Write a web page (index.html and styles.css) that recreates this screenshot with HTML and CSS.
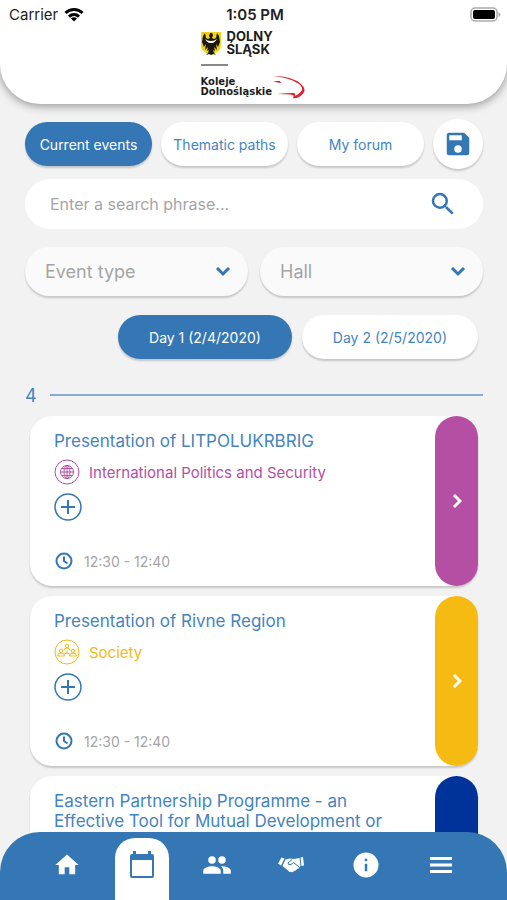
FILE: index.html
```html
<!DOCTYPE html>
<html lang="en">
<head>
    <meta charset="UTF-8">
    <meta name="viewport" content="width=device-width, initial-scale=1.0">
    <title>Current events</title>
    <link rel="stylesheet" href="styles.css">
</head>
<body>
    <header class="header">
        <!-- Status bar -->
        <div class="status">
            <div class="status__carrier">
                <span>Carrier</span>
                <svg width="20" height="15" viewBox="0 0 20 15" fill="none" stroke="#000" stroke-width="3">
                    <path d="M1.5 6a12 12 0 0 1 17 0"/>
                    <path d="M5 9.6a7.2 7.2 0 0 1 10 0"/>
                    <path d="M10 14.5L7 11.6a4.3 4.3 0 0 1 6 0z" fill="#000" stroke="none"/>
                </svg>
            </div>
            <span class="status__time">1:05 PM</span>
            <svg class="status__battery" width="31" height="15" viewBox="0 0 31 15">
                <rect x="1" y="1" width="26" height="13" rx="4" fill="#fff" stroke="#aaa" stroke-width="1.5"/>
                <rect x="3" y="3" width="22" height="9" rx="2"/>
                <path d="M28.5 5v5q2-1 2-2.5t-2-2.5z" fill="#aaa"/>
            </svg>
        </div>

        <!-- Partner logos -->
        <div class="logos">
            <div class="logos__region">
                <svg width="20" height="24" viewBox="0 0 20 24">
                    <path d="M0 1h20v14q0 6-10 9Q0 21 0 15z" fill="#f2d21b"/>
                    <path d="M9 2h2l1 2-1 3 2 1 2-1 1-5 2 3 1 6-2 5-2-3 1 6-3-3 1 4-2-1 1 3 2 2-3-1-2 1-2-1-3 1 2-2 1-3-2 1 1-4-3 3 1-6-2 3-2-5 1-6 2-3 1 5 2 1 2-1-1-2z" fill="#1c1a10"/>
                    <path d="M4 7q1 5 6 5t6-5q-1 3-6 3T4 7z" fill="#fff"/>
                </svg>
                <div>
                    <div>DOLNY</div>
                    <div>ŚLĄSK</div>
                </div>
            </div>
            <div class="logos__line"></div>
            <div class="logos__rail">
                <div>
                    <div>Koleje</div>
                    <div>Dolnośląskie</div>
                </div>
                <svg width="33" height="24" viewBox="0 0 33 24" fill="#e2202b">
                    <path d="M1 1Q20 1 29 9q8 7-2 13-4 2-6 1 1-2 0-3-6-1-16-1 9-1 17-1 2 1 1 3 12-6 4-12Q19 3 1 1z"/>
                    <path d="M1 6h7l1 2q-3 0-8-2z"/>
                </svg>
            </div>
        </div>
    </header>

    <main class="main">
        <div class="tabs">
            <button type="button" class="pill pill--active">Current events</button>
            <button type="button" class="pill">Thematic paths</button>
            <button type="button" class="pill">My forum</button>
            <button type="button" class="save" aria-label="Save">
                <svg width="30" height="30" viewBox="0 0 24 24" fill="currentColor"><path d="M17 3H5a2 2 0 0 0-2 2v14a2 2 0 0 0 2 2h14a2 2 0 0 0 2-2V7l-4-4zm-5 16a3 3 0 1 1 0-6 3 3 0 0 1 0 6zm3-10H5V5h10v4z"/></svg>
            </button>
        </div>

        <form class="search">
            <input type="text" class="search__input" placeholder="Enter a search phrase..." aria-label="Search phrase">
            <button type="button" class="search__btn" aria-label="Search">
                <svg width="30" height="30" viewBox="0 0 24 24" fill="currentColor"><path d="M15.5 14h-.79l-.28-.27A6.47 6.47 0 0 0 16 9.5 6.5 6.5 0 1 0 9.5 16c1.61 0 3.09-.59 4.23-1.57l.27.28v.79l5 4.99L20.49 19l-4.99-5zm-6 0a4.5 4.5 0 1 1 0-9 4.5 4.5 0 0 1 0 9z"/></svg>
            </button>
        </form>

        <div class="filters">
            <div class="filter">
                <select class="filter__select" aria-label="Event type">
                    <option>Event type</option>
                </select>
                <svg class="filter__arrow" width="16" height="10" viewBox="0 0 16 10"><path d="M2 1l6 6 6-6"/></svg>
            </div>
            <div class="filter">
                <select class="filter__select" aria-label="Hall">
                    <option>Hall</option>
                </select>
                <svg class="filter__arrow" width="16" height="10" viewBox="0 0 16 10"><path d="M2 1l6 6 6-6"/></svg>
            </div>
        </div>

        <div class="days">
            <button type="button" class="pill pill--active">Day 1 (2/4/2020)</button>
            <button type="button" class="pill">Day 2 (2/5/2020)</button>
        </div>

        <div class="count">
            <span>4</span>
            <div class="count__line"></div>
        </div>

        <!-- Events -->
        <div class="events">
            <article class="event event--politics">
                <div class="event__body">
                    <h2 class="event__title">Presentation of LITPOLUKRBRIG</h2>
                    <div class="event__path">
                        <svg width="26" height="26" viewBox="0 0 26 26" fill="none" stroke="currentColor">
                            <circle cx="13" cy="13" r="12"/>
                            <circle cx="13" cy="13" r="6.5"/>
                            <ellipse cx="13" cy="13" rx="3" ry="6.5"/>
                            <path d="M13 6v14M6 13h14M7.5 9.5h11M7.5 16.5h11"/>
                        </svg>
                        <span>International Politics and Security</span>
                    </div>
                    <button type="button" class="event__add" aria-label="Add to my forum">
                        <svg width="28" height="28" viewBox="0 0 28 28"><circle cx="14" cy="14" r="13"/><path d="M14 7v14M7 14h14" stroke-width="2"/></svg>
                    </button>
                    <div class="event__time">
                        <svg width="18" height="18" viewBox="0 0 18 18"><circle cx="9" cy="9" r="7.5"/><path d="M9 4.5V9l3.5 2.5"/></svg>
                        <span>12:30 - 12:40</span>
                    </div>
                </div>
                <a href="#" class="event__more" aria-label="Details">
                    <svg width="10" height="16" viewBox="0 0 10 16"><path d="M2 2l6 6-6 6"/></svg>
                </a>
            </article>

            <article class="event event--society">
                <div class="event__body">
                    <h2 class="event__title">Presentation of Rivne Region</h2>
                    <div class="event__path">
                        <svg width="26" height="26" viewBox="0 0 26 26" fill="none" stroke="currentColor">
                            <circle cx="13" cy="13" r="12"/>
                            <circle cx="13" cy="7" r="1.8"/>
                            <path d="M10 11.5q0-2.5 3-2.5t3 2.5M13 12v2M10 15l3-1 3 1"/>
                            <circle cx="7" cy="12" r="1.8"/>
                            <path d="M3.5 17q0-3 3.5-3t3.500 3z"/>
                            <circle cx="19" cy="12" r="1.8"/>
                            <path d="M15.5 17q0-3 3.5-3t3.500 3z"/>
                        </svg>
                        <span>Society</span>
                    </div>
                    <button type="button" class="event__add" aria-label="Add to my forum">
                        <svg width="28" height="28" viewBox="0 0 28 28"><circle cx="14" cy="14" r="13"/><path d="M14 7v14M7 14h14" stroke-width="2"/></svg>
                    </button>
                    <div class="event__time">
                        <svg width="18" height="18" viewBox="0 0 18 18"><circle cx="9" cy="9" r="7.5"/><path d="M9 4.5V9l3.5 2.5"/></svg>
                        <span>12:30 - 12:40</span>
                    </div>
                </div>
                <a href="#" class="event__more" aria-label="Details">
                    <svg width="10" height="16" viewBox="0 0 10 16"><path d="M2 2l6 6-6 6"/></svg>
                </a>
            </article>

            <article class="event event--europe">
                <div class="event__body">
                    <h2 class="event__title">Eastern Partnership Programme - an Effective Tool for Mutual Development or</h2>
                </div>
                <a href="#" class="event__more" aria-label="Details"></a>
            </article>
        </div>
    </main>

    <!-- Bottom menu -->
    <nav class="nav">
        <a href="#" class="nav__item" aria-label="Home">
            <svg width="28" height="28" viewBox="0 0 24 24" fill="currentColor"><path d="M10 20v-6h4v6h5v-8h3L12 3 2 12h3v8z"/></svg>
        </a>
        <a href="#" class="nav__item nav__item--active" aria-label="Events">
            <svg width="26" height="28" viewBox="0 0 26 28" fill="currentColor"><path d="M23 3h-1V0h-3v3H7V0H4v3H3a2 2 0 0 0-2 2v20a2 2 0 0 0 2 2h20a2 2 0 0 0 2-2V5a2 2 0 0 0-2-2zm0 22H3V9h20v16z"/></svg>
        </a>
        <a href="#" class="nav__item" aria-label="People">
            <svg width="30" height="30" viewBox="0 0 24 24" fill="currentColor"><path d="M16 11a3 3 0 1 0 0-6 3 3 0 0 0 0 6zm-8 0a3 3 0 1 0 0-6 3 3 0 0 0 0 6zm0 2c-2.33 0-7 1.17-7 3.5V19h14v-2.5c0-2.33-4.67-3.5-7-3.5zm8 0c-.29 0-.62.02-.97.05 1.16.84 1.97 1.97 1.97 3.45V19h6v-2.5c0-2.33-4.67-3.5-7-3.5z"/></svg>
        </a>
        <a href="#" class="nav__item" aria-label="Partners">
            <svg width="26" height="18" viewBox="0 0 26 18" fill="currentColor">
                <path d="M3.500 1.500l3 1-3.500 7-3-2zM22.500 1.500l2.500-.5 1 8.500-2.500.5z"/>
                <path d="M7.500 3.500l4.500-1 4 .5 5.500-1 1 8-1.500 1.500q0 1.500-2 1.500-1 2-3 2-1 1.500-3 1-2 0-3-1.500L4.500 10z"/>
                <path d="M14 3.500L10 7q0 2.500 3 1.500l2.500-2 5.500 4.500" fill="none" stroke="#3577b5"/>
            </svg>
        </a>
        <a href="#" class="nav__item" aria-label="Information">
            <svg width="30" height="30" viewBox="0 0 24 24" fill="currentColor"><path d="M12 2a10 10 0 1 0 0 20 10 10 0 0 0 0-20zm1 15h-2v-6h2v6zm0-8h-2V7h2v2z"/></svg>
        </a>
        <a href="#" class="nav__item" aria-label="Menu">
            <svg width="22" height="16" viewBox="0 0 22 16" fill="currentColor"><path d="M0 0h22v3H0zM0 6.5h22v3H0zM0 13h22v3H0z"/></svg>
        </a>
    </nav>
</body>
</html>
```
FILE: styles.css
```css
:root {
    --blue: #3577b5;
    --text-blue: #4484bf;
    --gray: #a5a5a5;
    --bg: #f2f2f2;
    --shadow: 0 2px 2px rgba(0, 0, 0, 0.18);
}

* {
    box-sizing: border-box;
}

body {
    margin: 0;
    height: 100vh;
    display: flex;
    flex-direction: column;
    overflow: hidden;
    background-color: var(--bg);
    color: var(--text-blue);
    font-family: Inter, sans-serif;
}

button,
input,
select {
    border: none;
    margin: 0;
    padding: 0;
    font-family: inherit;
    color: inherit;
}

svg {
    display: block;
    flex: none;
}

/* HEADER */
.header {
    background-color: #fff;
    border-radius: 0 0 40px 40px;
    box-shadow: 0 2px 10px rgba(0, 0, 0, 0.4);
    padding-bottom: 5px;
    flex: none;
}

.status {
    display: grid;
    grid-template-columns: 1fr auto 1fr;
    align-items: center;
    height: 28px;
    padding: 0 6px 0 9px;
    color: #222;
    font-size: 15px;
}

.status__carrier {
    display: flex;
    align-items: center;
    gap: 6px;
}

.status__time {
    font-weight: 600;
}

.status__battery {
    justify-self: end;
}

.logos {
    width: 106px;
    margin: 2px auto 0;
    color: #1d1d1b;
}

.logos__region {
    display: flex;
    align-items: center;
    gap: 6px;
    font-size: 13px;
    font-weight: 700;
    line-height: 13px;
}

.logos__line {
    width: 27px;
    height: 2px;
    margin: 8px 0 9px;
    background-color: #888;
}

.logos__rail {
    display: flex;
    align-items: center;
    font-family: "DejaVu Sans", sans-serif;
    font-size: 10px;
    font-weight: 700;
    line-height: 10px;
}

/* CONTROLS */
.main {
    flex: 1;
    min-height: 0;
    overflow: hidden;
    padding: 15px 24px 0 25px;
}

.tabs {
    display: flex;
    align-items: center;
    gap: 9px;
}

.tabs .pill {
    flex: 1;
}

.pill {
    height: 44px;
    border-radius: 22px;
    background-color: #fff;
    box-shadow: var(--shadow);
    font-size: 14px;
    white-space: nowrap;
    cursor: pointer;
}

.pill--active {
    background-color: var(--blue);
    color: #fff;
}

.save {
    display: grid;
    place-items: center;
    width: 50px;
    height: 50px;
    border-radius: 50%;
    background-color: #fff;
    box-shadow: var(--shadow);
    color: var(--blue);
}

.search {
    display: flex;
    align-items: center;
    height: 50px;
    margin-top: 10px;
    padding: 0 25px;
    border-radius: 25px;
    background-color: #fff;
}

.search__input {
    flex: 1;
    min-width: 0;
    background: none;
    font-size: 16px;
    outline: none;
}

.search__input::placeholder {
    color: var(--gray);
    opacity: 1;
}

.search__btn {
    background: none;
    color: var(--blue);
}

.filters {
    display: grid;
    grid-template-columns: 1fr 1fr;
    gap: 12px;
    margin-top: 18px;
}

.filter {
    display: grid;
    align-items: center;
}

.filter__select {
    grid-area: 1 / 1;
    appearance: none;
    width: 100%;
    height: 49px;
    padding: 0 40px 0 20px;
    border-radius: 25px;
    background-color: #fafafa;
    box-shadow: var(--shadow);
    color: var(--gray);
    font-size: 18px;
}

.filter__arrow {
    grid-area: 1 / 1;
    justify-self: end;
    margin-right: 17px;
    fill: none;
    stroke: var(--blue);
    stroke-width: 3;
    pointer-events: none;
}

.days {
    display: flex;
    justify-content: flex-end;
    gap: 10px;
    margin-top: 19px;
    padding-right: 5px;
}

.days .pill {
    padding: 0 31px;
}

.count {
    display: flex;
    align-items: center;
    gap: 13px;
    height: 24px;
    margin-top: 24px;
    font-size: 18px;
}

.count__line {
    flex: 1;
    height: 2px;
    background-color: #86abd4;
}

/* EVENTS */
.events {
    display: flex;
    flex-direction: column;
    gap: 10px;
    margin-top: 9px;
    padding: 0 5px;
}

.event {
    display: flex;
    min-height: 170px;
    border-radius: 22px;
    background-color: #fff;
    box-shadow: var(--shadow);
}

.event__body {
    flex: 1;
    padding: 15px 25px 15px 24px;
}

.event__title {
    margin: 0;
    font-size: 17px;
    font-weight: 400;
    line-height: 20px;
}

.event__path {
    display: flex;
    align-items: center;
    gap: 9px;
    margin-top: 8px;
    font-size: 15px;
    color: var(--path);
}

.event__add {
    display: block;
    margin-top: 8px;
    background: none;
}

.event__add svg,
.event__time svg {
    fill: none;
    stroke: var(--blue);
    stroke-width: 1.5;
}

.event__time {
    display: flex;
    align-items: center;
    gap: 11px;
    margin: 31px 0 0 1px;
    font-size: 14px;
    color: var(--gray);
}

.event__time svg {
    stroke-width: 2;
}

.event__more {
    display: grid;
    place-items: center;
    flex: none;
    width: 43px;
    border-radius: 22px;
    background-color: var(--path);
}

.event__more svg {
    fill: none;
    stroke: #fff;
    stroke-width: 3;
}

.event--politics {
    --path: #b44fa3;
}

.event--society {
    --path: #f5bb12;
}

.event--europe {
    --path: #003399;
}

/* BOTTOM MENU */
.nav {
    position: fixed;
    left: 0;
    right: 0;
    bottom: 0;
    display: flex;
    justify-content: space-between;
    height: 68px;
    padding: 6px 39px 0 40px;
    border-radius: 40px 40px 0 0;
    background-color: var(--blue);
}

.nav__item {
    display: grid;
    place-items: center;
    width: 54px;
    padding-bottom: 8px;
    color: #fff;
}

.nav__item--active {
    border-radius: 20px 20px 0 0;
    background-color: #fff;
    color: var(--blue);
}
```
